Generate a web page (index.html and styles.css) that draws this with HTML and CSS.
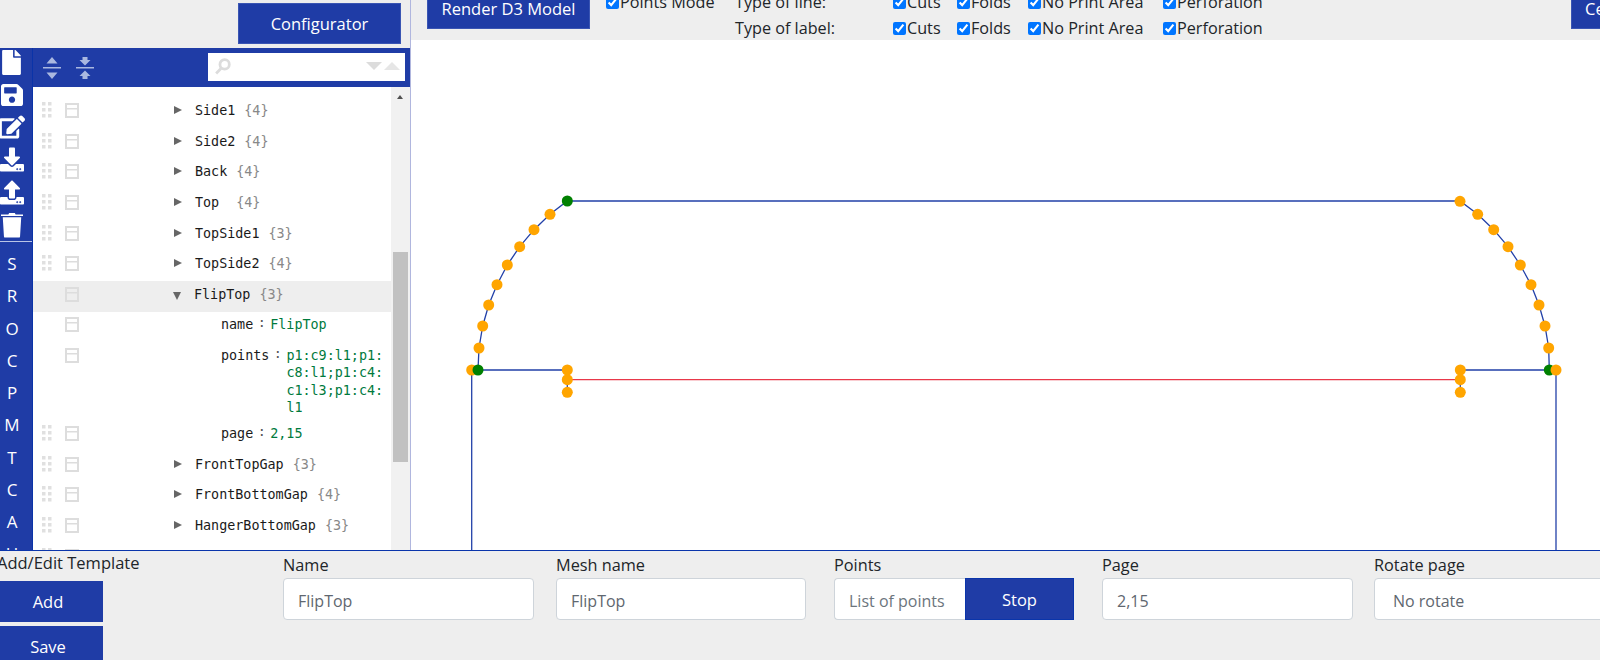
FILE: index.html
```html
<!DOCTYPE html>
<html lang="en">
<head>
<meta charset="utf-8">
<title>Template editor</title>
<link rel="stylesheet" href="styles.css">
</head>
<body>
<div class="main">
  <aside class="left">
    <div class="left-top"><button class="btn config-btn">Configurator</button></div>
    <div class="panel">
      <nav class="rail">
        <div class="rail-icons">
          <div class="rail-btn"><svg class="ic-file" viewBox="0 0 384 512"><path d="M224 136V0H24C10.7 0 0 10.7 0 24v464c0 13.3 10.7 24 24 24h336c13.3 0 24-10.7 24-24V160H248c-13.2 0-24-10.8-24-24zm160-14.1v6.1H256V0h6.1c6.4 0 12.5 2.5 17 7l97.9 98c4.5 4.5 7 10.6 7 16.9z"/></svg></div>
          <div class="rail-btn"><svg class="ic-save" viewBox="0 32 448 448"><path d="M433.941 129.941l-83.882-83.882A48 48 0 0 0 316.118 32H48C21.49 32 0 53.49 0 80v352c0 26.51 21.49 48 48 48h352c26.51 0 48-21.49 48-48V163.882a48 48 0 0 0-14.059-33.941zM224 416c-35.346 0-64-28.654-64-64 0-35.346 28.654-64 64-64s64 28.654 64 64c0 35.346-28.654 64-64 64zm96-304.52V212c0 6.627-5.373 12-12 12H76c-6.627 0-12-5.373-12-12V108c0-6.627 5.373-12 12-12h228.52c3.183 0 6.235 1.264 8.485 3.515l3.48 3.48A11.996 11.996 0 0 1 320 111.48z"/></svg></div>
          <div class="rail-btn"><svg class="ic-edit" viewBox="0 0 576 512"><path d="M402.6 83.2l90.2 90.2c3.8 3.8 3.8 10 0 13.8L274.4 405.6l-92.8 10.3c-12.4 1.4-22.9-9.1-21.5-21.5l10.3-92.8L388.8 83.2c3.8-3.8 10-3.8 13.8 0zm162-22.9l-48.8-48.8c-15.2-15.2-39.9-15.2-55.2 0l-35.4 35.4c-3.8 3.8-3.8 10 0 13.8l90.2 90.2c3.8 3.8 10 3.8 13.8 0l35.4-35.4c15.2-15.3 15.2-40 0-55.2zM384 346.2V448H64V128h229.8c3.2 0 6.2-1.3 8.5-3.5l40-40c7.6-7.6 2.2-20.5-8.5-20.5H48C21.5 64 0 85.5 0 112v352c0 26.5 21.5 48 48 48h352c26.5 0 48-21.5 48-48V306.2c0-10.7-12.9-16-20.5-8.5l-40 40c-2.2 2.3-3.5 5.3-3.5 8.5z"/></svg></div>
          <div class="rail-btn"><svg class="ic-load" viewBox="0 0 512 512"><path d="M216 0h80c13.3 0 24 10.7 24 24v168h87.7c17.8 0 26.7 21.5 14.1 34.1L269.7 378.3c-7.5 7.5-19.8 7.5-27.3 0L90.1 226.1c-12.6-12.6-3.7-34.1 14.1-34.1H192V24c0-13.3 10.7-24 24-24zm296 376v112c0 13.3-10.7 24-24 24H24c-13.3 0-24-10.7-24-24V376c0-13.3 10.7-24 24-24h146.7l49 49c20.1 20.1 52.5 20.1 72.6 0l49-49H488c13.3 0 24 10.7 24 24zm-124 88c0-11-9-20-20-20s-20 9-20 20 9 20 20 20 20-9 20-20zm64 0c0-11-9-20-20-20s-20 9-20 20 9 20 20 20 20-9 20-20z"/></svg></div>
          <div class="rail-btn"><svg class="ic-load" viewBox="0 0 512 512"><path d="M296 384h-80c-13.3 0-24-10.7-24-24V192h-87.7c-17.8 0-26.7-21.5-14.1-34.1L242.3 5.7c7.5-7.5 19.8-7.5 27.3 0l152.2 152.2c12.6 12.6 3.7 34.1-14.1 34.1H320v168c0 13.3-10.7 24-24 24zm216-8v112c0 13.3-10.7 24-24 24H24c-13.3 0-24-10.7-24-24V376c0-13.3 10.7-24 24-24h136v8c0 30.9 25.1 56 56 56h80c30.9 0 56-25.1 56-56v-8h136c13.3 0 24 10.7 24 24zm-124 88c0-11-9-20-20-20s-20 9-20 20 9 20 20 20 20-9 20-20zm64 0c0-11-9-20-20-20s-20 9-20 20 9 20 20 20 20-9 20-20z"/></svg></div>
          <div class="rail-btn"><svg class="ic-trash" viewBox="0 0 448 512"><path d="M0 42h448v32H0zM150 42l16-32h116l16 32zM36 96h376l-24 392a26 26 0 0 1-26 24H86a26 26 0 0 1-26-24z"/></svg></div>
        </div>
        <div class="rail-letters">
          <span class="letter">S</span><span class="letter">R</span><span class="letter">O</span><span class="letter">C</span><span class="letter">P</span><span class="letter">M</span><span class="letter">T</span><span class="letter">C</span><span class="letter">A</span><span class="letter">H</span>
        </div>
      </nav>
      <section class="editor">
        <header class="editor-head">
          <svg class="tool" viewBox="0 0 18 22"><path d="M9 0l5.500 6.500h-11zM0 10h18v1.600H0zM9 22l-5.500-6.500h11z"/></svg>
          <svg class="tool tool-second" viewBox="0 0 18 22"><path d="M6.500 0h5v3H14.500L9 8.500 3.500 3h3zM0 10h18v1.600H0zM9 13.500l5.500 5.500h-3v3h-5v-3h-3z"/></svg>
          <div class="search">
            <svg class="search-ic" viewBox="0 0 16 16"><circle cx="10" cy="6" r="4.400"/><path d="M7 9.500L2 14.500"/></svg>
            <span class="tri-down"></span><span class="tri-up"></span>
          </div>
        </header>
        <div class="tree-wrap">
          <div class="tree">
            <div class="row"><span class="grip"></span><span class="ctx"></span><span class="arrow"></span><span class="name">Side1</span><span class="count">{4}</span></div>
            <div class="row"><span class="grip"></span><span class="ctx"></span><span class="arrow"></span><span class="name">Side2</span><span class="count">{4}</span></div>
            <div class="row"><span class="grip"></span><span class="ctx"></span><span class="arrow"></span><span class="name">Back</span><span class="count">{4}</span></div>
            <div class="row"><span class="grip"></span><span class="ctx"></span><span class="arrow"></span><span class="name">Top&nbsp;</span><span class="count">{4}</span></div>
            <div class="row"><span class="grip"></span><span class="ctx"></span><span class="arrow"></span><span class="name">TopSide1</span><span class="count">{3}</span></div>
            <div class="row"><span class="grip"></span><span class="ctx"></span><span class="arrow"></span><span class="name">TopSide2</span><span class="count">{4}</span></div>
            <div class="row row-active"><span class="grip grip-off"></span><span class="ctx"></span><span class="arrow arrow-open"></span><span class="name">FlipTop</span><span class="count">{3}</span></div>
            <div class="row row-prop"><span class="grip grip-off"></span><span class="ctx"></span><span class="key">name</span><span class="sep">:</span><span class="value">FlipTop</span></div>
            <div class="row row-prop row-multi"><span class="grip grip-off"></span><span class="ctx"></span><span class="key">points</span><span class="sep">:</span><span class="value value-wrap">p1:c9:l1;p1:<br>c8:l1;p1:c4:<br>c1:l3;p1:c4:<br>l1</span></div>
            <div class="row row-prop"><span class="grip"></span><span class="ctx"></span><span class="key">page</span><span class="sep">:</span><span class="value">2,15</span></div>
            <div class="row"><span class="grip"></span><span class="ctx"></span><span class="arrow"></span><span class="name">FrontTopGap</span><span class="count">{3}</span></div>
            <div class="row"><span class="grip"></span><span class="ctx"></span><span class="arrow"></span><span class="name">FrontBottomGap</span><span class="count">{4}</span></div>
            <div class="row"><span class="grip"></span><span class="ctx"></span><span class="arrow"></span><span class="name">HangerBottomGap</span><span class="count">{3}</span></div>
            <div class="row"><span class="grip"></span><span class="ctx"></span></div>
          </div>
          <div class="scrollbar"><span class="scroll-up"></span><span class="scroll-thumb"></span></div>
        </div>
      </section>
    </div>
  </aside>
  <main class="right">
    <div class="topbar">
      <button class="btn render-btn">Render D3 Model</button>
      <div class="opts">
        <label class="opt"><input type="checkbox" checked>Points Mode</label>
        <span class="opt">Type of line:</span>
        <label class="opt"><input type="checkbox" checked>Cuts</label>
        <label class="opt"><input type="checkbox" checked>Folds</label>
        <label class="opt"><input type="checkbox" checked>No Print Area</label>
        <label class="opt"><input type="checkbox" checked>Perforation</label>
        <span></span>
        <span class="opt">Type of label:</span>
        <label class="opt"><input type="checkbox" checked>Cuts</label>
        <label class="opt"><input type="checkbox" checked>Folds</label>
        <label class="opt"><input type="checkbox" checked>No Print Area</label>
        <label class="opt"><input type="checkbox" checked>Perforation</label>
      </div>
      <button class="btn center-btn">Center</button>
    </div>
    <svg class="canvas" viewBox="411 40 1189 510">
      <g class="blue-line">
        <polyline points="471.700,550 471.700,370"/>
        <polyline points="1556,550 1556,370"/>
        <polyline points="478,370 479,348 482.700,326 488.700,305 497,284.700 507.300,265 519.700,246.700 534,229.700 550,214.300 567.300,201 1460,201 1477.700,214.300 1493.700,229.700 1508,246.700 1520.300,265 1531,284.700 1539,305 1545,326 1548.700,348 1549.300,370"/>
        <polyline points="478,370 567.300,370 567.300,392.300"/>
        <polyline points="1549.300,370 1460.300,370 1460.300,392.300"/>
      </g>
      <line class="red-line" x1="567.300" y1="379.700" x2="1460.300" y2="379.700"/>
      <g class="pt-orange">
        <circle cx="550" cy="214.300" r="5.500"/><circle cx="534" cy="229.700" r="5.500"/><circle cx="519.700" cy="246.700" r="5.500"/><circle cx="507.300" cy="265" r="5.500"/><circle cx="497" cy="284.700" r="5.500"/><circle cx="488.700" cy="305" r="5.500"/><circle cx="482.700" cy="326" r="5.500"/><circle cx="479" cy="348" r="5.500"/><circle cx="471.700" cy="370" r="5.500"/>
        <circle cx="567.300" cy="370" r="5.500"/><circle cx="567.300" cy="379.700" r="5.500"/><circle cx="567.300" cy="392.300" r="5.500"/>
      </g>
      <circle class="pt-green" cx="567.300" cy="201" r="5.500"/>
      <circle class="pt-green" cx="478" cy="370" r="5.500"/>
      <circle class="pt-green" cx="1549.300" cy="370" r="5.500"/>
      <g class="pt-orange">
        <circle cx="1460" cy="201.300" r="5.500"/><circle cx="1477.700" cy="214.300" r="5.500"/><circle cx="1493.700" cy="229.700" r="5.500"/><circle cx="1508" cy="246.700" r="5.500"/><circle cx="1520.300" cy="265" r="5.500"/><circle cx="1531" cy="284.700" r="5.500"/><circle cx="1539" cy="305" r="5.500"/><circle cx="1545" cy="326" r="5.500"/><circle cx="1548.700" cy="348" r="5.500"/><circle cx="1556" cy="370" r="5.500"/>
        <circle cx="1460.300" cy="370" r="5.500"/><circle cx="1460.300" cy="379.700" r="5.500"/><circle cx="1460.300" cy="392.300" r="5.500"/>
      </g>
    </svg>
  </main>
</div>
<footer class="bottom">
  <div class="actions">
    <div class="actions-title">Add/Edit Template</div>
    <button class="btn action-btn">Add</button>
    <button class="btn action-btn">Save</button>
  </div>
  <div class="field field-name gap-s"><label class="field-label">Name</label><input class="control" value="FlipTop"></div>
  <div class="field gap-l"><label class="field-label">Mesh name</label><input class="control" value="FlipTop"></div>
  <div class="field field-points gap-l"><label class="field-label">Points</label>
    <div class="group"><input class="control control-group" placeholder="List of points"><button class="btn stop-btn">Stop</button></div>
  </div>
  <div class="field field-name gap-t"><label class="field-label">Page</label><input class="control" value="2,15"></div>
  <div class="field"><label class="field-label">Rotate page</label><select class="control control-select"><option>No rotate</option></select></div>
</footer>
</body>
</html>
```
FILE: styles.css
```css
* { box-sizing: border-box; }
html, body { height: 100%; }
body {
  margin: 0;
  width: 1600px;
  height: 660px;
  overflow: hidden;
  background: #eeeeee;
  color: #212529;
  font-family: "Open Sans", "Noto Sans", sans-serif;
  font-size: 16.500px;
}
.btn {
  background: #1f3ca6;
  color: #fff;
  border: 1px solid #3a55b3;
  border-radius: 0;
  font-family: inherit;
  font-size: 16.500px;
  padding: 0;
}
.main { display: flex; height: 550px; }

/* left column */
.left {
  width: 411px;
  flex: none;
  border-right: 1px solid #b0b6de;
  display: flex;
  flex-direction: column;
}
.left-top { height: 48px; padding: 3px 0 0 238px; }
.config-btn { width: 163px; height: 41px; }
.panel { flex: 1; display: flex; min-height: 0; }
.rail {
  width: 33px;
  flex: none;
  background: #1f3ca6;
  border-right: 1px solid #0a33a8;
  overflow: hidden;
}
.rail svg { fill: #fff; display: block; }
.rail-icons { margin-top: -2px; height: 195px; }
.rail-btn {
  width: 23px;
  height: 32.500px;
  display: flex;
  align-items: center;
  justify-content: center;
}
.ic-file { width: 19px; height: 25px; }
.ic-save { width: 22px; height: 22px; }
.ic-edit { width: 26px; height: 24px; margin-left: 1px; flex: none; }
.ic-load { width: 24px; height: 25px; flex: none; margin-left: 1px; }
.ic-trash { width: 22px; height: 26px; }
.rail-letters {
  border-top: 1px solid #b9c4e6;
  padding-top: 6px;
}
.letter {
  display: block;
  width: 24px;
  height: 32.250px;
  line-height: 32px;
  text-align: center;
  color: #fff;
  font-size: 17px;
}

/* editor */
.editor { flex: 1; display: flex; flex-direction: column; min-width: 0; }
.editor-head {
  height: 39px;
  flex: none;
  background: #1f3ca6;
  display: flex;
  align-items: center;
  padding: 0 5px 0 10px;
}
.tool { width: 18px; height: 22px; fill: #aab8e0; margin-top: 1px; }
.tool-second { margin-left: 15px; }
.search {
  margin-left: auto;
  width: 197px;
  height: 28px;
  background: #fff;
  display: flex;
  align-items: center;
  padding: 0 5px 0 6px;
  margin-top: -1px;
}
.search-ic {
  width: 17px;
  height: 17px;
  fill: none;
  stroke: #dcdcdc;
  stroke-width: 2.600;
  margin-right: auto;
  margin-top: -2px;
}
.tri-down, .tri-up {
  width: 0;
  height: 0;
  border-left: 8px solid transparent;
  border-right: 8px solid transparent;
  margin-top: -2px;
}
.tri-down { border-top: 8px solid #dcdcdc; margin-right: 2px; }
.tri-up { border-bottom: 8px solid #e6e6e6; }
.tree-wrap { flex: 1; display: flex; min-height: 0; background: #fff; }
.tree {
  flex: 1;
  overflow: hidden;
  padding-top: 10.400px;
  font-family: "DejaVu Sans Mono", "Liberation Mono", monospace;
  font-size: 13.400px;
  color: #1a1a1a;
}
.row {
  display: flex;
  align-items: flex-start;
  padding: 4.800px 0 8.400px 9px;
  line-height: 17.400px;
  min-height: 30.600px;
}
.row-multi { padding-bottom: 3.900px; }
.row-active { background: #eeeeee; }
.grip {
  flex: none;
  width: 10px;
  height: 16px;
  background:
    linear-gradient(#e0e0e0, #e0e0e0) 0 0 / 3.500px 3.500px no-repeat,
    linear-gradient(#e0e0e0, #e0e0e0) 6px 0 / 3.500px 3.500px no-repeat,
    linear-gradient(#e0e0e0, #e0e0e0) 0 6px / 3.500px 3.500px no-repeat,
    linear-gradient(#e0e0e0, #e0e0e0) 6px 6px / 3.500px 3.500px no-repeat,
    linear-gradient(#e0e0e0, #e0e0e0) 0 12px / 3.500px 3.500px no-repeat,
    linear-gradient(#e0e0e0, #e0e0e0) 6px 12px / 3.500px 3.500px no-repeat;
}
.grip-off { background: none; }
.ctx {
  flex: none;
  width: 14px;
  height: 15px;
  margin: 1px 0 0 13px;
  border: 2px solid #dddddd;
  background: linear-gradient(#dddddd, #dddddd) 0 3px / 100% 1.500px no-repeat;
}
.arrow {
  flex: none;
  width: 0;
  height: 0;
  margin: 4px 13px 0 95px;
  border-left: 8px solid #666;
  border-top: 4.500px solid transparent;
  border-bottom: 4.500px solid transparent;
}
.arrow-open {
  margin: 6px 13px 0 94px;
  border-left: 4.500px solid transparent;
  border-right: 4.500px solid transparent;
  border-top: 8px solid #666;
  border-bottom: 0;
}
.name { white-space: pre; }
.count { color: #888; margin-left: 9px; }
.key { margin-left: 142px; flex: none; }
.sep { flex: none; width: 17px; text-align: center; color: #555; margin-top: -2px; }
.value { color: #007a3d; }
.value-wrap { width: 100px; }
.scrollbar {
  flex: none;
  width: 19px;
  background: #f1f1f1;
  position: relative;
  display: flex;
  justify-content: flex-end;
}
.scroll-up {
  position: absolute;
  left: 6px;
  top: 8px;
  width: 0;
  height: 0;
  border-left: 3.500px solid transparent;
  border-right: 3.500px solid transparent;
  border-bottom: 4px solid #505050;
}
.scroll-thumb {
  width: 15px;
  height: 210px;
  margin: 165px 2px 0 0;
  background: #c1c1c1;
}

/* right column */
.right { flex: 1; min-width: 0; display: flex; flex-direction: column; overflow: hidden; }
.topbar {
  height: 40px;
  flex: none;
  display: flex;
  align-items: flex-end;
  overflow: hidden;
  padding-left: 16px;
}
.render-btn { width: 163px; height: 41px; flex: none; margin-bottom: 11px; }
.opts {
  display: grid;
  grid-template-columns: 129px 158px 64px 71px 135px auto;
  grid-template-rows: 26px 26px;
  margin: 0 0 -1px 16px;
  flex: none;
  font-size: 16.200px;
  white-space: nowrap;
}
.opt { display: flex; align-items: center; height: 26px; }
.opt input {
  width: 13px;
  height: 13px;
  margin: 0 1px 0 0;
  accent-color: #0075ff;
  flex: none;
}
.center-btn {
  width: 163px;
  height: 41px;
  flex: none;
  margin: 0 -134px 11px auto;
  text-align: left;
  padding-left: 13px;
}
.canvas { display: block; flex: 1; width: 1189px; height: 510px; background: #fff; }
.blue-line polyline { fill: none; stroke: #2240a8; stroke-width: 1.300; }
.red-line { stroke: #e8384a; stroke-width: 1.300; }
.pt-orange { fill: #ffa500; }
.pt-green { fill: #008000; }

/* bottom */
.bottom {
  height: 110px;
  border-top: 1px solid #0a35ab;
  display: flex;
  overflow: hidden;
}
.actions { width: 283px; flex: none; }
.actions-title { margin: 2px 0 8px -3px; height: 20px; line-height: 20px; font-size: 16.500px; white-space: nowrap; }
.action-btn { display: block; width: 110px; height: 41px; border: 0; margin: 0 0 4px -7px; }
.field { width: 250px; flex: none; padding-top: 4px; }
.field-name { width: 251px; }
.gap-s { margin-right: 22px; }
.gap-t { margin-right: 21px; }
.gap-l { margin-right: 28px; }
.field-points { width: 240px; }
.field-label { display: block; height: 20px; line-height: 20px; margin-bottom: 3px; font-size: 16.300px; }
.control {
  display: block;
  width: 100%;
  height: 42px;
  padding: 3px 14px 0;
  background: #fff;
  border: 1px solid #ced4da;
  border-radius: 4px;
  color: #5f6770;
  font-family: inherit;
  font-size: 16px;
}
.control::placeholder { color: #6c757d; opacity: 1; }
.group { display: flex; }
.control-group { flex: none; width: 131px; border-radius: 4px 0 0 4px; border-right: 0; }
.stop-btn { flex: none; width: 109px; height: 42px; border: 1px solid #0a35ab; }
```
